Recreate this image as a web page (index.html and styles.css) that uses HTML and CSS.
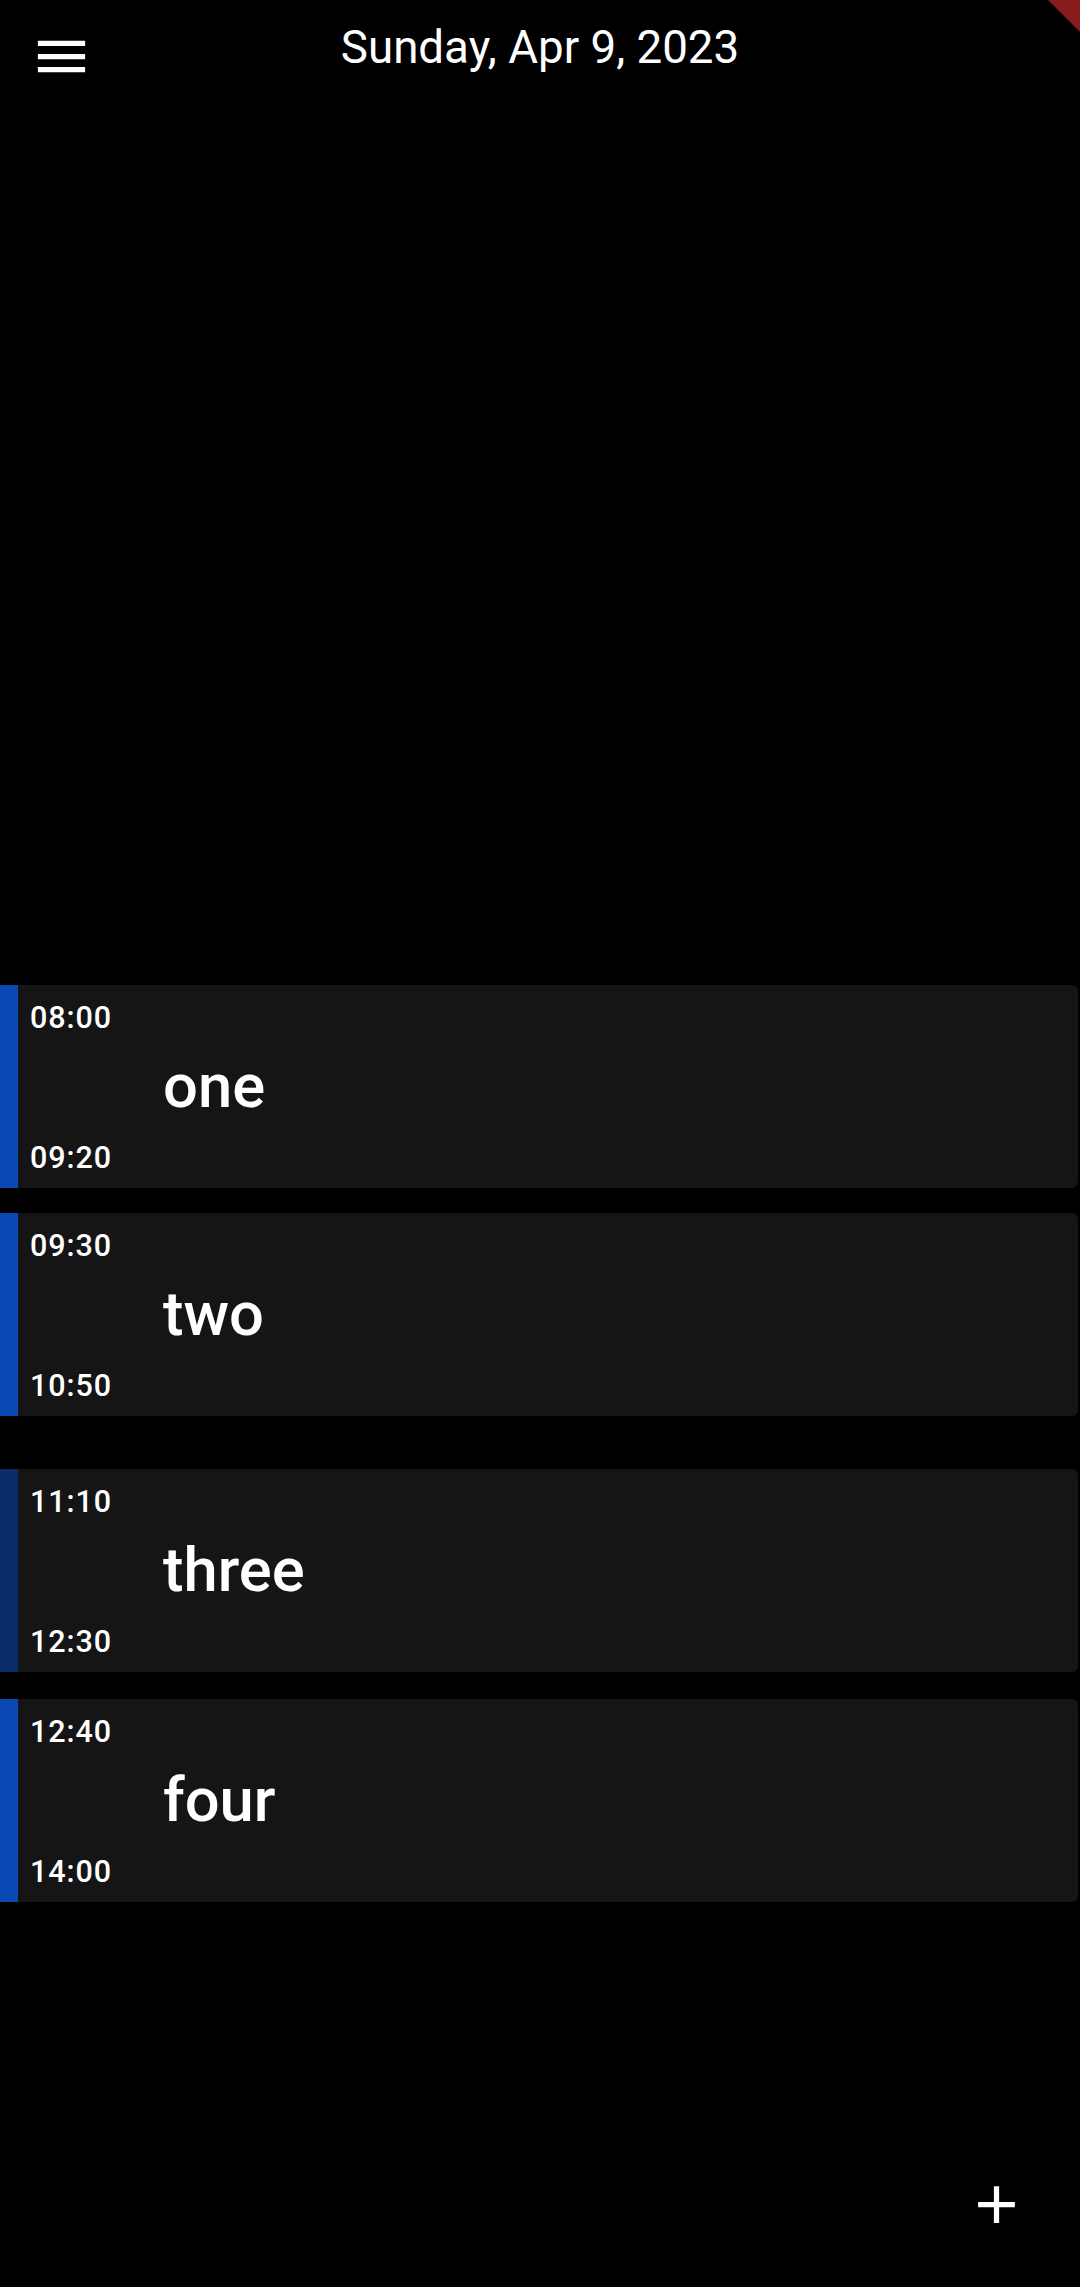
FILE: index.html
```html
<!DOCTYPE html>
<html lang="en">
<head>
<meta charset="utf-8">
<title>Schedule</title>
<link rel="stylesheet" href="styles.css">
</head>
<body>
<div class="screen">
  <header class="appbar">
    <button class="menu-btn" aria-label="Menu">
      <svg viewBox="0 0 24 24" width="63" height="63"><path d="M3 6h18v2H3zM3 11h18v2H3zM3 16h18v2H3z" fill="#fff"/></svg>
    </button>
    <h1 class="title">Sunday, Apr 9, 2023</h1>
    <div class="spacer"></div>
  </header>

  <main class="schedule">
    <div class="event">
      <div class="bar"></div>
      <div class="times"><span class="time">08:00</span><span class="time">09:20</span></div>
      <div class="name">one</div>
    </div>
    <div class="event">
      <div class="bar"></div>
      <div class="times"><span class="time">09:30</span><span class="time">10:50</span></div>
      <div class="name">two</div>
    </div>
    <div class="event gap-long">
      <div class="bar bar-dark"></div>
      <div class="times"><span class="time">11:10</span><span class="time">12:30</span></div>
      <div class="name">three</div>
    </div>
    <div class="event gap-after-long">
      <div class="bar"></div>
      <div class="times"><span class="time">12:40</span><span class="time">14:00</span></div>
      <div class="name">four</div>
    </div>
  </main>

  <button class="fab" aria-label="Add">
    <svg viewBox="0 0 24 24" width="63" height="63"><path d="M19 13h-6v6h-2v-6H5v-2h6V5h2v6h6v2z" fill="#fff"/></svg>
  </button>
  <div class="debug-corner"></div>
</div>
</body>
</html>
```

FILE: styles.css
```css
html, body {
  margin: 0;
  padding: 0;
  background: #000;
}

.screen {
  position: relative;
  width: 1080px;
  height: 2287px;
  overflow: hidden;
  background: #000;
  font-family: Roboto, "Noto Sans", sans-serif;
  color: #fff;
}

.appbar {
  display: grid;
  grid-template-columns: 1fr auto 1fr;
  align-items: start;
  height: 110px;
}

.menu-btn {
  justify-self: start;
  margin: 25px 0 0 30px;
  padding: 0;
  border: 0;
  background: none;
  width: 63px;
  height: 63px;
  display: block;
}

.menu-btn svg,
.fab svg {
  display: block;
}

.title {
  margin: 0;
  padding-top: 21px;
  font-size: 45.7px;
  font-weight: 400;
  line-height: 1.172;
  color: #fff;
  white-space: nowrap;
}

.schedule {
  display: flex;
  flex-direction: column;
  gap: 25px;
  margin-top: 875px;
  padding-right: 2px;
}

.event {
  display: flex;
  height: 203px;
  background: #151515;
  border-radius: 0 6px 6px 0;
  overflow: hidden;
}

.event.gap-long {
  margin-top: 28px;
}

.event.gap-after-long {
  margin-top: 2px;
}

.bar {
  width: 18px;
  flex: none;
  background: #0a48b3;
}

.bar-dark {
  background: #0a2c68;
}

.times {
  width: 145px;
  flex: none;
  display: flex;
  flex-direction: column;
  justify-content: space-between;
  padding: 15px 0 12px 12px;
  box-sizing: border-box;
}

.time {
  font-size: 30.5px;
  font-weight: 500;
  line-height: 1.172;
  letter-spacing: 0.9px;
}

.name {
  align-self: center;
  font-size: 61.5px;
  font-weight: 500;
  line-height: 1.172;
}

.fab {
  position: absolute;
  left: 965px;
  top: 2173px;
  width: 63px;
  height: 63px;
  padding: 0;
  border: 0;
  background: none;
}

.debug-corner {
  position: absolute;
  top: 0;
  right: 0;
  width: 32px;
  height: 32px;
  background: #8a1b1b;
  clip-path: polygon(0 0, 100% 0, 100% 100%);
}
```
